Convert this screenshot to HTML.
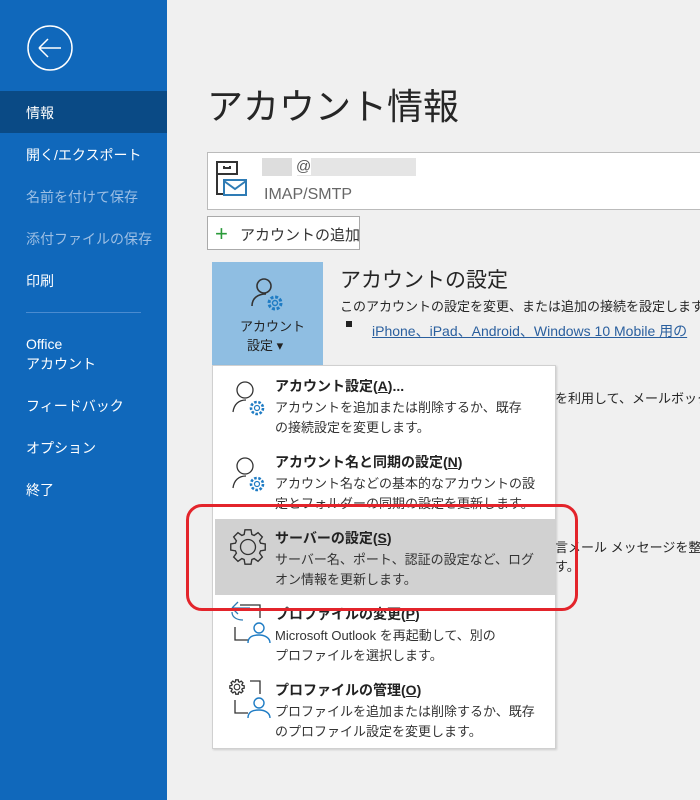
<!DOCTYPE html>
<html><head><meta charset="utf-8"><style>
*{margin:0;padding:0;box-sizing:border-box}
body{width:700px;height:800px;overflow:hidden;background:#f0f0f0;position:relative;font-family:"Liberation Sans","Noto Sans CJK JP",sans-serif;color:#262626}
.a{position:absolute;white-space:nowrap}
#side{position:absolute;left:0;top:0;width:167px;height:800px;background:#1068bb}
.si{position:absolute;left:26px;font-size:14px;color:#fff}
.dim{color:#9dbfe4}
.mi .t{font-size:14px;font-weight:bold;color:#222}
.mi .d{font-size:13px;color:#333;line-height:20px}
</style></head><body>
<div id="side">
 <svg class="a" style="left:26px;top:24px" width="48" height="48" viewBox="0 0 48 48"><circle cx="24" cy="24" r="22" fill="none" stroke="#fff" stroke-width="1.5"/><path d="M13 24H35M13 24L22 15M13 24L22 33" fill="none" stroke="#fff" stroke-width="1.5"/></svg>
 <div class="a" style="left:0;top:91px;width:167px;height:42px;background:#0a4a85"></div>
 <div class="si" style="top:103px">情報</div>
 <div class="si" style="top:145px">開く/エクスポート</div>
 <div class="si dim" style="top:187px">名前を付けて保存</div>
 <div class="si dim" style="top:229px">添付ファイルの保存</div>
 <div class="si" style="top:271px">印刷</div>
 <div class="a" style="left:26px;top:312px;width:115px;height:1px;background:#4a8bd0"></div>
 <div class="si" style="top:334px;line-height:20px">Office<br>アカウント</div>
 <div class="si" style="top:396px">フィードバック</div>
 <div class="si" style="top:438px">オプション</div>
 <div class="si" style="top:480px">終了</div>
</div>
<div class="a" style="left:207px;top:78px;font-size:36px;color:#262626">アカウント情報</div>
<div class="a" style="left:207px;top:152px;width:500px;height:58px;background:#fff;border:1px solid #bbb"></div>
<svg class="a" style="left:215px;top:160px" width="40" height="40" viewBox="0 0 40 40"><path d="M2 2H22V14H2ZM9 6V8H15V6M2 14V34H8" fill="none" stroke="#333" stroke-width="2"/><rect x="9" y="20" width="22" height="15" fill="none" stroke="#2f7cb5" stroke-width="2"/><path d="M9 21L20 29L31 21" fill="none" stroke="#2f7cb5" stroke-width="2"/></svg>
<div class="a" style="left:262px;top:158px;width:154px;height:18px;background:linear-gradient(90deg,#ddd 0 30px,#fff 30px 35px,#e5e5e5 35px)"></div>
<div class="a" style="left:296px;top:158px;font-size:15px;color:#555;background:#fff">@</div>
<div class="a" style="left:264px;top:186px;font-size:16px;color:#666">IMAP/SMTP</div>
<div class="a" style="left:207px;top:216px;width:153px;height:34px;background:#fff;border:1px solid #aaa"></div>
<div class="a" style="left:215px;top:221px;font-size:22px;color:#2a9a3a;font-weight:300">+</div>
<div class="a" style="left:240px;top:224px;font-size:15px;color:#333">アカウントの追加</div>
<div class="a" style="left:212px;top:262px;width:111px;height:105px;background:#8fbee2"></div>
<svg class="a" style="left:248px;top:274px" width="40" height="40" viewBox="0 0 40 40"><circle cx="16" cy="12" r="7" fill="none" stroke="#333" stroke-width="1.6"/><path d="M4 32C4 24 10 20 18 20" fill="none" stroke="#333" stroke-width="1.6"/><circle cx="27" cy="29" r="6" fill="none" stroke="#1f7cc4" stroke-width="3" stroke-dasharray="3 1.7"/><circle cx="27" cy="29" r="2.5" fill="none" stroke="#1f7cc4" stroke-width="1.4"/></svg>
<div class="a" style="left:240px;top:316px;font-size:13px;color:#222">アカウント</div>
<div class="a" style="left:247px;top:335px;font-size:13px;color:#222">設定 ▾</div>
<div class="a" style="left:340px;top:264px;font-size:21px">アカウントの設定</div>
<div class="a" style="left:340px;top:296px;font-size:13px">このアカウントの設定を変更、または追加の接続を設定します。</div>
<div class="a" style="left:346px;top:321px;width:6px;height:6px;background:#222"></div>
<div class="a" style="left:372px;top:321px;font-size:14px;color:#2a5f9e;text-decoration:underline">iPhone、iPad、Android、Windows 10 Mobile 用の</div>
<div class="a" style="left:555px;top:388px;font-size:13px">を利用して、メールボックス</div>
<div class="a" style="left:555px;top:537px;font-size:13px">言メール メッセージを整理し</div>
<div class="a" style="left:555px;top:556px;font-size:13px">す。</div>
<div class="a mi" style="left:212px;top:365px;width:344px;height:384px;background:#fff;border:1px solid #d0d0d0;box-shadow:1px 1px 2px rgba(0,0,0,.15)">
 <div class="a" style="left:2px;top:153px;width:340px;height:76px;background:#d1d1d1"></div>
 <svg class="a" style="left:18px;top:12px" width="34" height="42" viewBox="0 0 34 42"><circle cx="14" cy="12" r="8" fill="none" stroke="#333" stroke-width="1.3"/><path d="M2 34C3 26 8 22 15 22" fill="none" stroke="#333" stroke-width="1.3"/><circle cx="26" cy="30" r="6" fill="none" stroke="#1f7cc4" stroke-width="2.6" stroke-dasharray="2.6 1.6"/><circle cx="26" cy="30" r="2.5" fill="none" stroke="#1f7cc4" stroke-width="1.2"/></svg>
 <div class="a t" style="left:62px;top:10px">アカウント設定(<u>A</u>)...</div>
 <div class="a d" style="left:62px;top:32px">アカウントを追加または削除するか、既存<br>の接続設定を変更します。</div>
 <svg class="a" style="left:18px;top:88px" width="34" height="42" viewBox="0 0 34 42"><circle cx="14" cy="12" r="8" fill="none" stroke="#333" stroke-width="1.3"/><path d="M2 34C3 26 8 22 15 22" fill="none" stroke="#333" stroke-width="1.3"/><circle cx="26" cy="30" r="6" fill="none" stroke="#1f7cc4" stroke-width="2.6" stroke-dasharray="2.6 1.6"/><circle cx="26" cy="30" r="2.5" fill="none" stroke="#1f7cc4" stroke-width="1.2"/></svg>
 <div class="a t" style="left:62px;top:86px">アカウント名と同期の設定(<u>N</u>)</div>
 <div class="a d" style="left:62px;top:108px">アカウント名などの基本的なアカウントの設<br>定とフォルダーの同期の設定を更新します。</div>
 <div class="a t" style="left:62px;top:162px">サーバーの設定(<u>S</u>)</div>
 <div class="a d" style="left:62px;top:184px">サーバー名、ポート、認証の設定など、ログ<br>オン情報を更新します。</div>
 <div class="a t" style="left:62px;top:238px">プロファイルの変更(<u>P</u>)</div>
 <div class="a d" style="left:62px;top:260px">Microsoft Outlook を再起動して、別の<br>プロファイルを選択します。</div>
 <div class="a t" style="left:62px;top:314px">プロファイルの管理(<u>O</u>)</div>
 <div class="a d" style="left:62px;top:336px">プロファイルを追加または削除するか、既存<br>のプロファイル設定を変更します。</div>
</div>
<svg class="a" style="left:0;top:0" width="700" height="800" viewBox="0 0 700 800">
 <defs><path id="g" d="M10.04,-3.07L13.79,-2.43L13.79,2.43L10.04,3.07L9.27,4.93L11.47,8.03L8.03,11.47L4.93,9.27L3.07,10.04L2.43,13.79L-2.43,13.79L-3.07,10.04L-4.93,9.27L-8.03,11.47L-11.47,8.03L-9.27,4.93L-10.04,3.07L-13.79,2.43L-13.79,-2.43L-10.04,-3.07L-9.27,-4.93L-11.47,-8.03L-8.03,-11.47L-4.93,-9.27L-3.07,-10.04L-2.43,-13.79L2.43,-13.79L3.07,-10.04L4.93,-9.27L8.03,-11.47L11.47,-8.03L9.27,-4.93Z"/></defs>
 <g fill="none" stroke="#333" stroke-width="1.3">
  <use href="#g" transform="translate(248,547) scale(1.25)" stroke-width="1.1"/>
  <circle cx="248" cy="547" r="7.5"/>
  <path d="M240 605H260V618M235 627V640H248"/>
  <path d="M250 608H232M232 608L238 602M232 608L238 614M232 612C232 618 238 620 243 620" stroke="#2f7cb5"/>
  <use href="#g" transform="translate(237,687) scale(0.52)" stroke-width="2.5"/>
  <circle cx="237" cy="687" r="2.8" stroke-width="1.1"/>
  <path d="M250 681H260V694M235 700V713H248"/>
 </g>
 <g fill="none" stroke="#1f7cc4" stroke-width="1.4">
  <circle cx="259" cy="628" r="5"/><path d="M248 643C248 637 253 635 259 635C265 635 270 638 270 643"/>
  <circle cx="259" cy="703" r="5"/><path d="M248 718C248 712 253 710 259 710C265 710 270 713 270 718"/>
 </g>
</svg>
<div class="a" style="left:186px;top:504px;width:392px;height:107px;border:3px solid #e3242b;border-radius:16px"></div>
</body></html>
